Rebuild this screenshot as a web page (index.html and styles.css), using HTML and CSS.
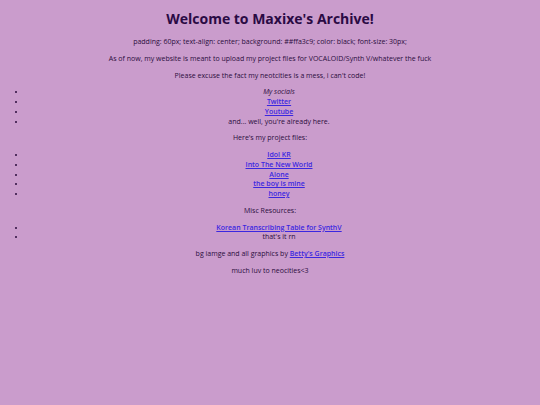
FILE: index.html
```html
<!DOCTYPE html>
<html>
<head>
<meta charset="utf-8">
<title>Maxixe's Archive</title>
<link rel="stylesheet" href="styles.css">
</head>
<body>
<h1 class="title">Welcome to Maxixe's Archive!</h1>
<p>padding: 60px; text-align: center; background: ##ffa3c9; color: black; font-size: 30px;</p>
<p>As of now, my website is meant to upload my project files for VOCALOID/Synth V/whatever the fuck</p>
<p>Please excuse the fact my neotcities is a mess, i can't code!</p>
<ul class="list">
  <li><em>My socials</em></li>
  <li><a href="#">Twitter</a></li>
  <li><a href="#">Youtube</a></li>
  <li>and... well, you're already here.</li>
</ul>
<p>Here's my project files:</p>
<ul class="list">
  <li><a href="#">Idol KR</a></li>
  <li><a href="#">Into The New World</a></li>
  <li><a href="#">Alone</a></li>
  <li><a href="#">the boy is mine</a></li>
  <li><a href="#">honey</a></li>
</ul>
<p>Misc Resources:</p>
<ul class="list">
  <li><a href="#">Korean Transcribing Table for SynthV</a></li>
  <li>that's it rn</li>
</ul>
<p>bg iamge and all graphics by <a href="#">Betty's Graphics</a></p>
<p>much luv to neocities&lt;3</p>
</body>
</html>
```

FILE: styles.css
```css
html {
  background: #ca9ccc;
}
body {
  margin: 0 8px 8px;
  padding-top: 1px;
  background: #ca9ccc;
  color: #2a0d3c;
  font-family: "Comic Sans MS", "Open Sans", "DejaVu Sans", sans-serif;
  font-size: 7px;
  text-align: center;
}
.title {
  font-size: 14px;
  margin: 8px 0 9px;
  color: #2a0a44;
}
p {
  margin: 7px 0;
  line-height: 9.75px;
}
.list {
  margin: 7px 0;
  padding-left: 18px;
}
.list li {
  line-height: 9.75px;
}
a {
  color: #3b27e0;
  font-weight: 600;
}
```
